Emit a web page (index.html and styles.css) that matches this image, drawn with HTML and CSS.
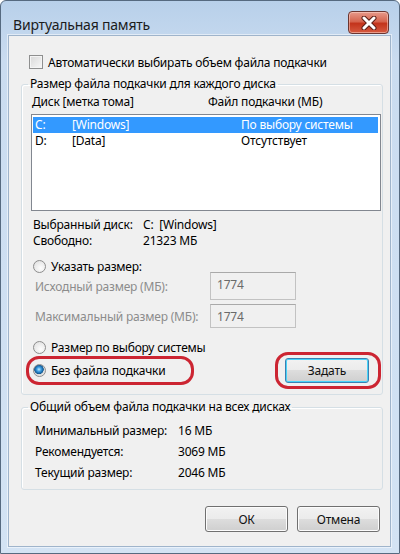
FILE: index.html
```html
<!DOCTYPE html>
<html lang="ru">
<head>
  <meta charset="UTF-8">
  <title>Виртуальная память</title>
  <link rel="stylesheet" href="styles.css">
</head>
<body>
  <div class="window">
    <div class="titlebar">
      <span class="title">Виртуальная память</span>
      <button class="close-btn" type="button">
        <svg width="18" height="14" viewBox="0 0 18 14">
          <path d="M4 2 L14 12 M14 2 L4 12" stroke="#5a1e16" stroke-width="5" stroke-linecap="round"/>
          <path d="M4 2 L14 12 M14 2 L4 12" stroke="#fff" stroke-width="3" stroke-linecap="round"/>
        </svg>
      </button>
    </div>

    <div class="client">
      <label class="check-row">
        <span class="checkbox"></span>
        Автоматически выбирать объем файла подкачки
      </label>

      <fieldset class="group group-disks">
        <legend>Размер файла подкачки для каждого диска</legend>
        <div class="list-head">
          <span>Диск [метка тома]</span>
          <span>Файл подкачки (МБ)</span>
        </div>
        <div class="listbox">
          <div class="list-row selected">
            <span>C:</span><span>[Windows]</span><span>По выбору системы</span>
          </div>
          <div class="list-row">
            <span>D:</span><span>[Data]</span><span>Отсутствует</span>
          </div>
        </div>

        <div class="info">
          <div class="info-row"><span>Выбранный диск:</span><span>C:&nbsp;&nbsp;[Windows]</span></div>
          <div class="info-row"><span>Свободно:</span><span>21323 МБ</span></div>
        </div>

        <label class="radio-row radio-custom">
          <span class="radio"></span>
          Указать размер:
        </label>
        <div class="size-row size-first">
          <span class="size-label">Исходный размер (МБ):</span>
          <span class="size-input">1774</span>
        </div>
        <div class="size-row size-second">
          <span class="size-label">Максимальный размер (МБ):</span>
          <span class="size-input">1774</span>
        </div>

        <label class="radio-row radio-system">
          <span class="radio"></span>
          Размер по выбору системы
        </label>

        <div class="action-row">
          <div class="mark mark-radio">
            <label class="radio-row">
              <span class="radio checked"></span>
              Без файла подкачки
            </label>
          </div>
          <div class="mark mark-btn">
            <button class="btn btn-default" type="button">Задать</button>
          </div>
        </div>
      </fieldset>

      <fieldset class="group group-total">
        <legend>Общий объем файла подкачки на всех дисках</legend>
        <div class="total-row"><span>Минимальный размер:</span><span>16 МБ</span></div>
        <div class="total-row"><span>Рекомендуется:</span><span>3069 МБ</span></div>
        <div class="total-row"><span>Текущий размер:</span><span>2046 МБ</span></div>
      </fieldset>

      <div class="footer">
        <button class="btn" type="button">ОК</button>
        <button class="btn" type="button">Отмена</button>
      </div>
    </div>
  </div>
</body>
</html>
```
FILE: styles.css
```css
* {
  box-sizing: border-box;
}

body {
  margin: 0;
  background: #fff;
  font-family: "Noto Sans", "Open Sans", sans-serif;
  font-size: 12px;
  letter-spacing: -0.2px;
  color: #000;
}

.window {
  width: 400px;
  height: 554px;
  border: 1px solid #566a80;
  border-radius: 6px 6px 0 0;
  background: linear-gradient(to bottom, #b8d0ea, #cadcf0 60px, #d3e3f4);
  padding: 0 8px 7px 7px;
}

.titlebar {
  height: 34px;
  display: flex;
  justify-content: space-between;
  align-items: flex-start;
}

.title {
  font-size: 14px;
  line-height: 18px;
  margin: 15px 0 0 5px;
  color: #1b1b1b;
}

.close-btn {
  margin: 10px 2px 0 0;
  width: 41px;
  height: 23px;
  border: 1px solid #6b3530;
  border-radius: 4px;
  background: linear-gradient(to bottom, #e79a8b, #d6654f 45%, #c3341c 55%, #d65a40);
  box-shadow: inset 0 0 0 1px rgba(255, 220, 210, 0.5);
  display: flex;
  align-items: center;
  justify-content: center;
  padding: 0;
}

.client {
  height: 512px;
  background: #f0f0f0;
  border: 1px solid #9fb4cb;
  box-shadow: 0 0 0 1px rgba(255, 255, 255, 0.5);
  padding: 19px 7px 0 12px;
}

/* checkbox line */
.check-row {
  display: flex;
  align-items: center;
  height: 14px;
  margin-left: 8px;
  gap: 5px;
}

.checkbox {
  width: 14px;
  height: 14px;
  border: 1px solid #8e8f8f;
  background: linear-gradient(135deg, #d8d8d8, #f7f7f7);
  box-shadow: inset 0 0 0 1px #f4f4f4;
}

/* group boxes */
.group {
  margin: 7px 0 0 0;
  padding: 0;
  border: 1px solid #d5dfe5;
  border-radius: 3px;
  box-shadow: inset 1px 1px 0 #fff;
}

.group legend {
  margin-left: 6px;
  padding: 0 2px;
  line-height: 16px;
}

.list-head {
  display: flex;
  margin: 2px 0 0 10px;
  line-height: 16px;
}

.list-head span:first-child {
  width: 176px;
}

.listbox {
  margin: 4px 0 0 9px;
  width: 350px;
  height: 97px;
  background: #fff;
  border: 1px solid #828790;
  padding: 2px 2px 2px 1px;
}

.list-row {
  display: grid;
  grid-template-columns: 37px 169px 1fr;
  height: 16px;
  line-height: 16px;
  padding-left: 2px;
}

.list-row.selected {
  background: #3399ff;
  color: #fff;
}

.info {
  margin: 6px 0 0 11px;
}

.info-row {
  display: flex;
  line-height: 16px;
}

.info-row span:first-child {
  width: 110px;
}

/* radio buttons */
.radio-row {
  display: flex;
  align-items: center;
  gap: 5px;
  height: 14px;
}

.radio {
  width: 13px;
  height: 13px;
  border-radius: 50%;
  border: 1px solid #8d8d8d;
  background: radial-gradient(circle at 60% 65%, #fdfdfd, #dcdcdc);
}

.radio.checked {
  background: radial-gradient(circle at 45% 40%, #bdeeff 0, #3b9be0 25%, #10568f 50%, #dcdcdc 56%, #f6f6f6);
}

.radio-custom {
  margin: 10px 0 0 11px;
}

.radio-system {
  margin: 12px 0 0 11px;
}

.size-row {
  display: flex;
  align-items: center;
  margin-left: 13px;
  color: #8c8c8c;
}

.size-first {
  height: 28px;
  margin-top: -1px;
}

.size-second {
  height: 24px;
  margin-top: 4px;
}

.size-label {
  width: 175px;
}

.size-input {
  align-self: stretch;
  width: 86px;
  border: 1px solid #c2c2c2;
  border-top-color: #a9a9a9;
  background: #f0f0f0;
  color: #6a6a6a;
  padding: 3px 0 0 6px;
}

.action-row {
  display: flex;
  align-items: center;
  justify-content: space-between;
  margin: -2px 1px 5px 4px;
}

.mark {
  border: 3px solid #cc2532;
  border-radius: 13px;
}

.mark-radio {
  width: 168px;
  height: 29px;
  display: flex;
  align-items: center;
  padding-left: 4px;
}

.mark-btn {
  width: 106px;
  height: 37px;
  display: flex;
  align-items: center;
  padding-left: 7px;
}

/* buttons */
.btn {
  font-family: inherit;
  font-size: 12px;
  letter-spacing: -0.2px;
  color: #111;
  height: 26px;
  width: 84px;
  border: 1px solid #707070;
  border-radius: 3px;
  background: linear-gradient(to bottom, #f2f2f2, #ebebeb 50%, #dddddd 50%, #cfcfcf);
  box-shadow: inset 0 0 0 1px #fcfcfc;
  padding: 0;
}

.btn-default {
  height: 25px;
  border-color: #3c7fb1;
  box-shadow: inset 0 0 0 1px #48d4f8;
}

.group-total {
  margin-top: 4px;
  padding-bottom: 6px;
}

.total-row {
  display: flex;
  line-height: 21px;
  margin-left: 13px;
}

.total-row:first-of-type {
  margin-top: 5px;
}

.total-row span:first-child {
  width: 143px;
}

.footer {
  display: flex;
  justify-content: flex-end;
  gap: 9px;
  margin: 16px 3px 0 0;
}

.footer .btn {
  width: 83px;
}
```
